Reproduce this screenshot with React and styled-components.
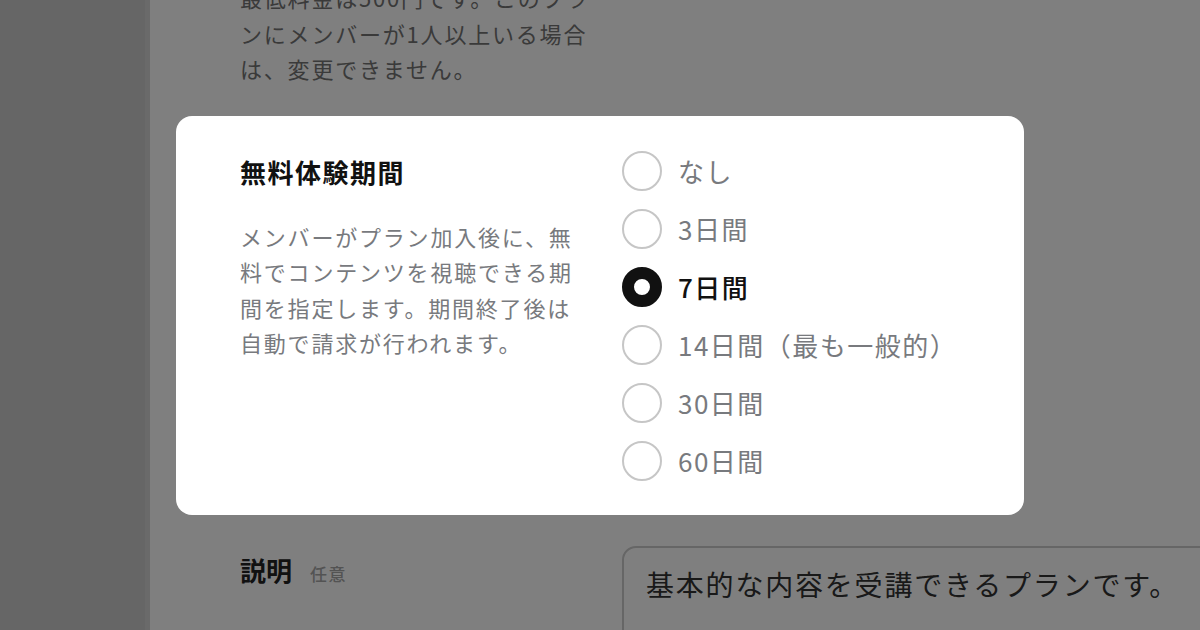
import React from "react";
import styled, { createGlobalStyle } from "styled-components";

const GlobalStyle = createGlobalStyle`
  html, body { margin: 0; padding: 0; }
  body {
    width: 1200px;
    height: 630px;
    overflow: hidden;
    background: #ffffff;
    font-family: "Noto Sans CJK JP", "Noto Sans", sans-serif;
  }
  * { box-sizing: border-box; }
`;

const Layout = styled.div`
  display: flex;
  width: 1200px;
  height: 630px;
`;

const Sidebar = styled.aside`
  flex: 0 0 150px;
  background: #cccccc;
  box-shadow: inset -5px 0 0 #d4d4d4;
`;

const Main = styled.main`
  flex: 1;
  background: #ffffff;
  padding-left: 90px;
  overflow: hidden;
`;

const Content = styled.div`
  margin-top: -20px;
  display: flex;
  flex-direction: column;
`;

const Row = styled.section`
  display: grid;
  grid-template-columns: 382px 1fr;
  align-items: start;
`;

const HelpText = styled.p`
  margin: 0;
  width: 354px;
  font-size: 22px;
  line-height: 35.5px;
  letter-spacing: 1.8px;
  color: ${(p) => p.$color || "#787a7e"};
`;

const Overlay = styled.div`
  position: fixed;
  inset: 0;
  background: rgba(0, 0, 0, 0.5);
  z-index: 10;
`;

const SpotlightRow = styled(Row)`
  position: relative;
  z-index: 20;
  width: 848px;
  margin: 29px 0 0 -64px;
  padding: 35px 64px 34px;
  background: #ffffff;
  border-radius: 16px;
  grid-template-columns: 382px 1fr;
`;

const LabelColumn = styled.div`
  display: flex;
  flex-direction: column;
`;

const Title = styled.h2`
  margin: 2px 0 0;
  font-size: 26px;
  line-height: 38px;
  font-weight: 700;
  letter-spacing: 1.5px;
  color: #111111;
`;

const Description = styled(HelpText)`
  margin-top: 28px;
`;

const Options = styled.div`
  display: flex;
  flex-direction: column;
  gap: 18px;
`;

const Option = styled.label`
  display: flex;
  align-items: center;
  gap: 16px;
  height: 40px;
  cursor: pointer;
`;

const Radio = styled.span`
  flex: 0 0 40px;
  width: 40px;
  height: 40px;
  border-radius: 50%;
  border: ${(p) => (p.$checked ? "12.5px solid #111111" : "2px solid #c6c6c6")};
  background: #ffffff;
`;

const OptionText = styled.span`
  font-size: 26px;
  line-height: 40px;
  letter-spacing: 1.5px;
  font-weight: ${(p) => (p.$checked ? 500 : 400)};
  color: ${(p) => (p.$checked ? "#111111" : "#787a7e")};
`;

const FieldRow = styled(Row)`
  margin-top: 31px;
`;

const FieldLabel = styled.div`
  display: flex;
  align-items: baseline;
  gap: 18px;
  padding-top: 2px;
`;

const FieldName = styled.span`
  font-size: 26px;
  line-height: 44px;
  font-weight: 700;
  color: #222222;
`;

const Optional = styled.span`
  font-size: 17px;
  letter-spacing: 1.5px;
  color: #a6a6a6;
  font-weight: 500;
`;

const TextArea = styled.textarea`
  display: block;
  width: 640px;
  height: 200px;
  margin: 0;
  padding: 14px 22px;
  border: 2px solid #cccccc;
  border-radius: 14px;
  font-family: inherit;
  font-size: 28px;
  line-height: 44px;
  letter-spacing: 1.8px;
  color: #333333;
  background: #ffffff;
  resize: none;
  outline: none;
`;

const options = [
  { label: "なし" },
  { label: "3日間" },
  { label: "7日間", checked: true },
  { label: "14日間（最も一般的）" },
  { label: "30日間" },
  { label: "60日間" },
];

export default function App() {
  return (
    <>
      <GlobalStyle />
      <Layout>
        <Sidebar />
        <Main>
          <Content>
            <Row>
              <HelpText $color="#747474">
                最低料金は500円です。このプランにメンバーが1人以上いる場合は、変更できません。
              </HelpText>
            </Row>
            <SpotlightRow>
              <LabelColumn>
                <Title>無料体験期間</Title>
                <Description>
                  メンバーがプラン加入後に、無料でコンテンツを視聴できる期間を指定します。期間終了後は自動で請求が行われます。
                </Description>
              </LabelColumn>
              <Options role="radiogroup">
                {options.map((o) => (
                  <Option key={o.label}>
                    <Radio $checked={!!o.checked} />
                    <OptionText $checked={!!o.checked}>{o.label}</OptionText>
                  </Option>
                ))}
              </Options>
            </SpotlightRow>
            <FieldRow>
              <FieldLabel>
                <FieldName>説明</FieldName>
                <Optional>任意</Optional>
              </FieldLabel>
              <TextArea readOnly value="基本的な内容を受講できるプランです。" />
            </FieldRow>
          </Content>
        </Main>
      </Layout>
      <Overlay />
    </>
  );
}
